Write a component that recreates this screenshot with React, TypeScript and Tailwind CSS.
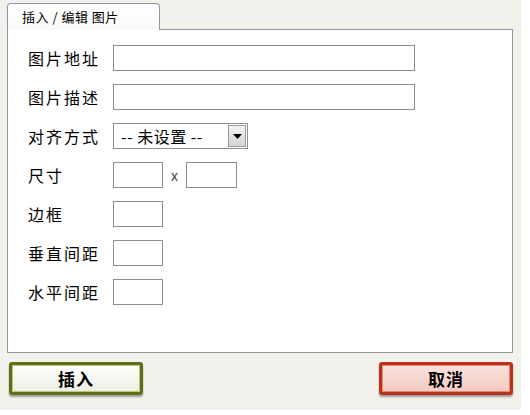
import React from "react";

const font = { fontFamily: '"Noto Sans CJK SC", "Noto Sans", sans-serif' };

function Row({ label, children }: { label: string; children: React.ReactNode }) {
  return (
    <div className="flex flex-row items-center h-[26px]">
      <span className="w-[85px] text-[16px] text-black tracking-[2px]">{label}</span>
      {children}
    </div>
  );
}

function Box({ w }: { w: string }) {
  return <div className={`${w} h-[26px] border border-[#8e8e8e] bg-white`} />;
}

function Button({ label, kind }: { label: string; kind: "ok" | "cancel" }) {
  const cls =
    kind === "ok"
      ? "border-[#5f6e17] from-[#ffffff] to-[#eceee4] shadow-[inset_0_0_0_1px_#b9c77a,0_2px_2px_rgba(0,0,0,0.35)]"
      : "border-[#b6321a] from-[#fbe1dc] to-[#f2cbc3] shadow-[inset_0_0_0_1px_#e48a72,0_2px_2px_rgba(0,0,0,0.35)]";
  return (
    <div
      className={`w-[134px] h-[33px] border-[3px] rounded-[3px] bg-gradient-to-b ${cls} flex items-center justify-center`}
    >
      <span className="text-[17px] font-bold text-black tracking-[1px]">{label}</span>
    </div>
  );
}

export default function App() {
  return (
    <div className="w-[521px] h-[410px] bg-[#f3f1ec] pl-[7px] pt-[3px]" style={font}>
      <div className="relative z-10 -mb-px w-[153px] h-[27px] border border-b-0 border-[#8c97a8] rounded-t-[4px] bg-gradient-to-b from-[#ffffff] to-[#fafaf8] flex items-center pl-[14px]">
        <span className="text-[13px] text-black tracking-[0.5px]">插入 / 编辑 图片</span>
      </div>
      <div className="w-[506px] h-[324px] border border-[#919b9c] bg-white pt-[15px] pl-[20px] flex flex-col gap-[13px]">
        <Row label="图片地址">
          <Box w="w-[302px]" />
        </Row>
        <Row label="图片描述">
          <Box w="w-[302px]" />
        </Row>
        <Row label="对齐方式">
          <div className="w-[135px] h-[26px] border border-[#8e8e8e] bg-white flex flex-row items-center">
            <span className="flex-1 pl-[7px] text-[16px] text-black whitespace-nowrap tracking-[0.5px]">-- 未设置 --</span>
            <div className="w-[18px] h-[22px] mr-[1px] border border-[#9a9a9a] bg-gradient-to-b from-[#f4f4f4] to-[#d4d4d4] flex items-center justify-center">
              <svg width="9" height="5" viewBox="0 0 9 5">
                <path d="M0 0 H9 L4.5 5 Z" fill="#000" />
              </svg>
            </div>
          </div>
        </Row>
        <Row label="尺寸">
          <Box w="w-[50px]" />
          <span className="w-[23px] text-center text-[14px] text-[#444]">x</span>
          <Box w="w-[51px]" />
        </Row>
        <Row label="边框">
          <Box w="w-[50px]" />
        </Row>
        <Row label="垂直间距">
          <Box w="w-[50px]" />
        </Row>
        <Row label="水平间距">
          <Box w="w-[50px]" />
        </Row>
      </div>
      <div className="flex flex-row justify-between w-[504px] ml-[2px] mt-[9px]">
        <Button label="插入" kind="ok" />
        <Button label="取消" kind="cancel" />
      </div>
    </div>
  );
}
